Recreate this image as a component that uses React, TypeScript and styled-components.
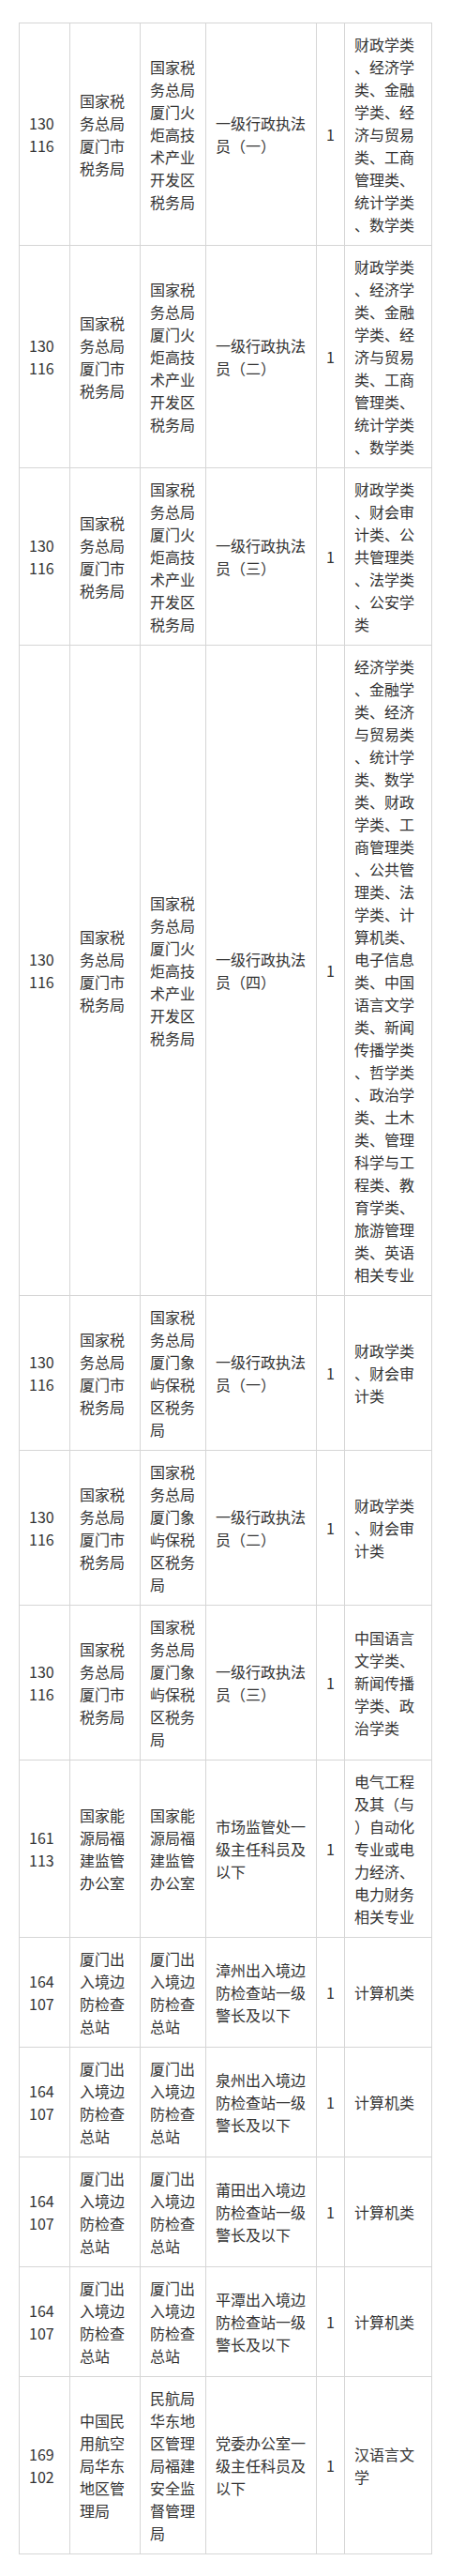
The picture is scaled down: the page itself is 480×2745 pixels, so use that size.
import React from "react";
import styled, { createGlobalStyle } from "styled-components";

const GlobalStyle = createGlobalStyle`
  html, body {
    margin: 0;
    padding: 0;
    background: #ffffff;
  }
  body {
    font-family: "Noto Sans CJK SC", "Noto Sans", sans-serif;
    color: #333333;
  }
`;

const Page = styled.div`
  padding: 24px 20px 22px 20px;
  width: 480px;
  box-sizing: border-box;
`;

const Table = styled.table`
  width: 440px;
  table-layout: fixed;
  border-collapse: collapse;
  border: 1px solid #d6d6d6;
`;

const Col = styled.col<{ $w: number }>`
  width: ${(p) => p.$w}px;
`;

const Cell = styled.td`
  border: 1px solid #d6d6d6;
  padding: 10px 10px;
  vertical-align: middle;
  text-align: left;
  font-size: 16px;
  line-height: 24px;
  color: #333333;
  line-break: anywhere;
  word-break: break-all;
  overflow-wrap: anywhere;
  text-spacing-trim: space-all;
  hanging-punctuation: none;
`;

type Row = {
  code: string;
  dept: string;
  unit: string;
  post: string;
  num: string;
  major: string;
};

const xmA = "国家税务总局厦门火炬高技术产业开发区税务局";
const xmB = "国家税务总局厦门象屿保税区税务局";
const xmTax = "国家税务总局厦门市税务局";
const border = "厦门出入境边防检查总站";

const rows: Row[] = [
  { code: "130116", dept: xmTax, unit: xmA, post: "一级行政执法员（一）", num: "1", major: "财政学类、经济学类、金融学类、经济与贸易类、工商管理类、统计学类、数学类" },
  { code: "130116", dept: xmTax, unit: xmA, post: "一级行政执法员（二）", num: "1", major: "财政学类、经济学类、金融学类、经济与贸易类、工商管理类、统计学类、数学类" },
  { code: "130116", dept: xmTax, unit: xmA, post: "一级行政执法员（三）", num: "1", major: "财政学类、财会审计类、公共管理类、法学类、公安学类" },
  { code: "130116", dept: xmTax, unit: xmA, post: "一级行政执法员（四）", num: "1", major: "经济学类、金融学类、经济与贸易类、统计学类、数学类、财政学类、工商管理类、公共管理类、法学类、计算机类、电子信息类、中国语言文学类、新闻传播学类、哲学类、政治学类、土木类、管理科学与工程类、教育学类、旅游管理类、英语相关专业" },
  { code: "130116", dept: xmTax, unit: xmB, post: "一级行政执法员（一）", num: "1", major: "财政学类、财会审计类" },
  { code: "130116", dept: xmTax, unit: xmB, post: "一级行政执法员（二）", num: "1", major: "财政学类、财会审计类" },
  { code: "130116", dept: xmTax, unit: xmB, post: "一级行政执法员（三）", num: "1", major: "中国语言文学类、新闻传播学类、政治学类" },
  { code: "161113", dept: "国家能源局福建监管办公室", unit: "国家能源局福建监管办公室", post: "市场监管处一级主任科员及以下", num: "1", major: "电气工程及其（与）自动化专业或电力经济、电力财务相关专业" },
  { code: "164107", dept: border, unit: border, post: "漳州出入境边防检查站一级警长及以下", num: "1", major: "计算机类" },
  { code: "164107", dept: border, unit: border, post: "泉州出入境边防检查站一级警长及以下", num: "1", major: "计算机类" },
  { code: "164107", dept: border, unit: border, post: "莆田出入境边防检查站一级警长及以下", num: "1", major: "计算机类" },
  { code: "164107", dept: border, unit: border, post: "平潭出入境边防检查站一级警长及以下", num: "1", major: "计算机类" },
  { code: "169102", dept: "中国民用航空局华东地区管理局", unit: "民航局华东地区管理局福建安全监督管理局", post: "党委办公室一级主任科员及以下", num: "1", major: "汉语言文学" },
];

const widths = [54, 75, 70, 118, 30, 93];

export default function App() {
  return (
    <>
      <GlobalStyle />
      <Page>
        <Table>
          <colgroup>
            {widths.map((w, i) => (
              <Col key={i} $w={w} />
            ))}
          </colgroup>
          <tbody>
            {rows.map((r, i) => (
              <tr key={i}>
                <Cell>{r.code}</Cell>
                <Cell>{r.dept}</Cell>
                <Cell>{r.unit}</Cell>
                <Cell>{r.post}</Cell>
                <Cell>{r.num}</Cell>
                <Cell>{r.major}</Cell>
              </tr>
            ))}
          </tbody>
        </Table>
      </Page>
    </>
  );
}
